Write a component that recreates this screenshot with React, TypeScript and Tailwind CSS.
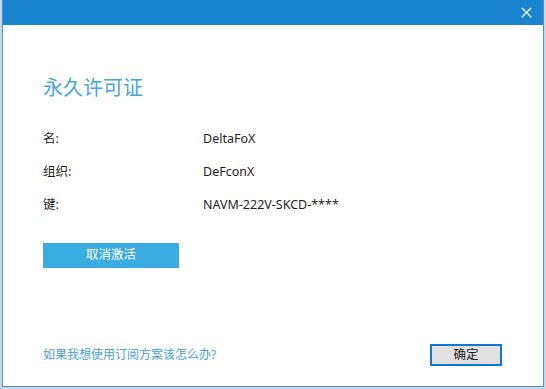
import { X } from "lucide-react";

const font = { fontFamily: '"Segoe UI", "Noto Sans", "Noto Sans CJK SC", sans-serif' };

const rows = [
  { label: "名:", value: "DeltaFoX" },
  { label: "组织:", value: "DeFconX" },
  { label: "键:", value: "NAVM-222V-SKCD-****" },
];

export default function App() {
  return (
    <div className="w-[546px] h-[389px] bg-[#c9d6e3] overflow-hidden" style={font}>
      <div className="ml-[2px] w-[542px] h-[387px] flex flex-col bg-white border border-[#4f8fd0] border-t-0">
        <div className="h-[25px] bg-[#1a84d0] flex justify-end items-center pr-[8px]">
          <X className="w-[17px] h-[17px] text-white" strokeWidth={1.8} />
        </div>
        <div className="flex-1 flex flex-col pl-[40px] pr-[41px]">
          <h1 className="mt-[50px] text-[20px] leading-[26px] text-[#4aa6d9] font-normal">永久许可证</h1>
          <div className="mt-[28px] flex flex-col gap-[14px] text-[12.5px] leading-[19px] text-[#1e1e1e]">
            {rows.map((r) => (
              <div key={r.label} className="flex">
                <span className="w-[160px]">{r.label}</span>
                <span>{r.value}</span>
              </div>
            ))}
          </div>
          <button className="mt-[29px] w-[136px] h-[25px] bg-[#3aacdf] text-white text-[12.5px]">
            取消激活
          </button>
          <div className="mt-auto mb-[20px] flex items-end justify-between">
            <a className="text-[12px] leading-[16px] text-[#4aa0d7] mb-[3px]">如果我想使用订阅方案该怎么办?</a>
            <button className="w-[72px] h-[22px] bg-[#e1e1e1] border-2 border-[#0f78d2] text-[12.5px] leading-none text-[#1e1e1e]">
              确定
            </button>
          </div>
        </div>
      </div>
    </div>
  );
}
